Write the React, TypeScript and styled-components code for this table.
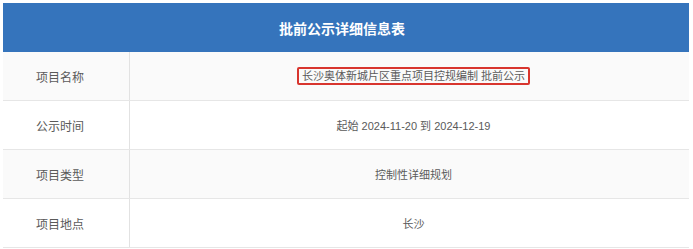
import styled, { createGlobalStyle } from "styled-components";

const GlobalStyle = createGlobalStyle`
  body {
    margin: 0;
    background: #ffffff;
    font-family: "Liberation Sans", "Noto Sans CJK SC", sans-serif;
  }
`;

const Page = styled.div`
  padding: 3px 4px 0 3px;
`;

const Table = styled.div`
  width: 686px;
  display: flex;
  flex-direction: column;
`;

const Header = styled.div`
  height: 49px;
  background: #3574bc;
  color: #ffffff;
  font-size: 14px;
  font-weight: bold;
  display: flex;
  align-items: center;
  justify-content: center;
  padding-right: 8px;
`;

const Row = styled.div<{ $striped: boolean }>`
  display: grid;
  grid-template-columns: 127px 1fr;
  height: 48px;
  border-bottom: 1px solid #e6e6e6;
  background: ${(p) => (p.$striped ? "#fafafa" : "#ffffff")};
  color: #5a5a5a;
`;

const Label = styled.div`
  display: flex;
  align-items: center;
  padding-left: 33px;
  font-size: 12px;
  border-right: 1px solid #e2e2e2;
`;

const Value = styled.div`
  display: flex;
  align-items: center;
  justify-content: center;
  padding-left: 8px;
  font-size: 11px;
`;

const Marked = styled.span`
  border: 2px solid #d8352e;
  border-radius: 2px;
  padding: 0 3px;
  line-height: 14px;
`;

const rows = [
  { label: "项目名称", value: "长沙奥体新城片区重点项目控规编制 批前公示", marked: true },
  { label: "公示时间", value: "起始 2024-11-20 到 2024-12-19" },
  { label: "项目类型", value: "控制性详细规划" },
  { label: "项目地点", value: "长沙" },
];

function App() {
  return (
    <>
      <GlobalStyle />
      <Page>
        <Table>
          <Header>批前公示详细信息表</Header>
          {rows.map((row, i) => (
            <Row key={row.label} $striped={i % 2 === 0}>
              <Label>{row.label}</Label>
              <Value>
                {row.marked ? <Marked>{row.value}</Marked> : row.value}
              </Value>
            </Row>
          ))}
        </Table>
      </Page>
    </>
  );
}

export default App;
